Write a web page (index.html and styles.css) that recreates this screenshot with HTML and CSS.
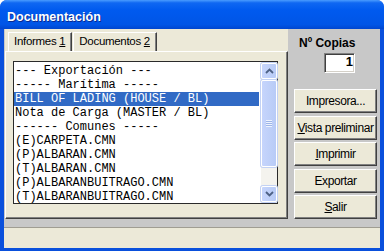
FILE: index.html
```html
<!DOCTYPE html>
<html lang="es">

<head>
    <meta charset="UTF-8">
    <title>Documentación</title>
    <link rel="stylesheet" href="styles.css">
</head>

<body>
    <div class="window">
        <div class="titlebar">Documentación</div>
        <div class="client">
            <div class="main">
                <div class="tabs">
                    <div class="tab-strip">
                        <div class="tab active">Informes <u>1</u></div>
                        <div class="tab">Documentos <u>2</u></div>
                    </div>
                    <div class="page">
                        <div class="listbox">
                            <ul class="rows">
                                <li>--- Exportación ---</li>
                                <li>----- Marítima -----</li>
                                <li class="selected">BILL OF LADING (HOUSE / BL)</li>
                                <li>Nota de Carga (MASTER / BL)</li>
                                <li>------ Comunes -----</li>
                                <li>(E)CARPETA.CMN</li>
                                <li>(P)ALBARAN.CMN</li>
                                <li>(T)ALBARAN.CMN</li>
                                <li>(P)ALBARANBUITRAGO.CMN</li>
                                <li>(T)ALBARANBUITRAGO.CMN</li>
                            </ul>
                            <div class="scrollbar">
                                <div class="sb-btn">
                                    <svg width="9" height="6" viewBox="0 0 9 6">
                                        <path d="M1 5 L4.5 1.5 L8 5" fill="none" stroke="#4d6185" stroke-width="1.8" />
                                    </svg>
                                </div>
                                <div class="sb-thumb"><span class="grip"></span></div>
                                <div class="sb-track"></div>
                                <div class="sb-btn">
                                    <svg width="9" height="6" viewBox="0 0 9 6">
                                        <path d="M1 1 L4.5 4.5 L8 1" fill="none" stroke="#4d6185" stroke-width="1.8" />
                                    </svg>
                                </div>
                            </div>
                        </div>
                    </div>
                </div>
                <div class="side">
                    <div class="copies-label">Nº Copias</div>
                    <div class="copies-input">1</div>
                    <div class="buttons">
                        <button class="btn">Impresora...</button>
                        <button class="btn"><u>V</u>ista preliminar</button>
                        <button class="btn"><u>I</u>mprimir</button>
                        <button class="btn">Exportar</button>
                        <button class="btn"><u>S</u>alir</button>
                    </div>
                </div>
            </div>
            <div class="status"></div>
        </div>
    </div>
</body>

</html>
```

FILE: styles.css
```css
body {
    margin: 0;
    background-color: #fff;
    font-family: "Liberation Sans", Arial, sans-serif;
    font-size: 12px;
    color: #000;
}

.window {
    width: 384px;
    height: 251px;
    display: flex;
    flex-direction: column;
    background-color: #0a50dc;
    border-radius: 7px 7px 0 0;
    overflow: hidden;
}

.titlebar {
    height: 29px;
    box-sizing: border-box;
    padding: 10px 0 0 7px;
    line-height: 15px;
    font-size: 12.5px;
    font-weight: bold;
    color: #fff;
    text-shadow: 1px 1px 0 #0b2a8f;
    background: linear-gradient(#4a9cff 0%, #0f67f2 10%, #005aef 35%, #0055e6 85%, #0046cf 100%);
}

.client {
    flex: 1;
    margin: 0 4px 3px;
    display: flex;
    flex-direction: column;
    background-color: #c8c8c8;
}

.main {
    display: flex;
    height: 190px;
}

/* tab control */

.tabs {
    width: 283px;
    margin-left: 1px;
    display: flex;
    flex-direction: column;
    background-color: #ece9d8;
}

.tab-strip {
    display: flex;
    height: 22px;
    box-sizing: border-box;
    padding: 3px 0 0 3px;
}

.tab {
    height: 19px;
    box-sizing: border-box;
    padding: 0 6px 0 5px;
    margin-right: 1px;
    line-height: 17px;
    font-size: 11.5px;
    letter-spacing: -0.3px;
    white-space: nowrap;
    border-top: 1px solid #fff;
    border-left: 1px solid #fff;
    border-right: 1px solid #404040;
    box-shadow: inset -1px 0 0 #808080;
}

.page {
    flex: 1;
    padding: 9px 0 0 7px;
    border: 1px solid;
    border-color: #fff #404040 #404040 #fff;
    box-shadow: inset -1px -1px 0 #808080;
}

/* list */

.listbox {
    width: 265px;
    height: 143px;
    box-sizing: border-box;
    display: flex;
    border: 1px solid #2a2a2a;
    background-color: #fff;
}

.rows {
    flex: 1;
    margin: 0 2px 0 0;
    padding: 2px 0 0 0;
    list-style: none;
    overflow: hidden;
    font-family: "Liberation Mono", "Courier New", monospace;
    font-size: 12px;
    line-height: 14px;
}

.rows li {
    height: 14px;
    padding-left: 1px;
    white-space: pre;
}

.rows li.selected {
    background-color: #316ac5;
    color: #fff;
}

.scrollbar {
    width: 16px;
    box-sizing: border-box;
    padding: 1px 0;
    display: flex;
    flex-direction: column;
    background-color: #f4f3ee;
}

.sb-btn,
.sb-thumb {
    box-sizing: border-box;
    border: 1px solid #fff;
    border-radius: 2px;
    background: linear-gradient(90deg, #c6d5fc, #b8cbf6);
    box-shadow: 0 0 0 1px #c3d2f4;
}

.sb-btn {
    height: 16px;
    display: flex;
    align-items: center;
    justify-content: center;
}

.sb-thumb {
    height: 87px;
    margin-top: 1px;
    display: flex;
    align-items: center;
    justify-content: center;
}

.grip {
    width: 6px;
    height: 7px;
    background: repeating-linear-gradient(#eef3fe 0 1px, #9db5e8 1px 2px);
}

.sb-track {
    flex: 1;
}

/* right column */

.side {
    flex: 1;
    padding-top: 7px;
}

.copies-label {
    margin-left: 11px;
    line-height: 15px;
    font-size: 12px;
    font-weight: bold;
}

.copies-input {
    width: 31px;
    height: 20px;
    box-sizing: border-box;
    margin: 2px 0 0 36px;
    padding-right: 1px;
    text-align: right;
    line-height: 16px;
    font-size: 13px;
    font-weight: bold;
    background-color: #fff;
    border: 1px solid;
    border-color: #808080 #fff #fff #808080;
    box-shadow: inset 1px 1px 0 #404040, inset -1px -1px 0 #d4d0c8;
}

.buttons {
    display: flex;
    flex-direction: column;
    gap: 2.5px;
    margin: 16px 0 0 6px;
    width: 83px;
}

.btn {
    height: 24px;
    padding: 0;
    font-family: inherit;
    font-size: 12px;
    letter-spacing: -0.4px;
    white-space: nowrap;
    color: #000;
    background-color: #ece9d8;
    border: 1px solid;
    border-color: #fff #404040 #404040 #fff;
    box-shadow: inset -1px -1px 0 #808080;
}

.status {
    height: 20px;
    margin-top: auto;
    border-top: 1px solid #a09d92;
    background-color: #ece9d8;
}
```
